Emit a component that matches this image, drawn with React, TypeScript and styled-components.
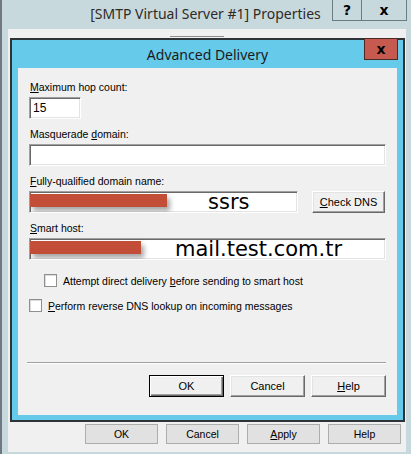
import styled, { createGlobalStyle } from 'styled-components';

const GlobalStyle = createGlobalStyle`
  html, body {
    margin: 0;
    padding: 0;
    background: #c8d9de;
  }
  * {
    box-sizing: border-box;
  }
`;

const Frame = styled.div`
  width: 411px;
  height: 454px;

  display: flex;
  flex-direction: column;

  background: #c8d9de;
  border-left: 2px solid #6f7881;
  overflow: hidden;
`;

const TitleBar = styled.div`
  height: 29px;

  position: relative;

  display: flex;
  align-items: flex-start;
  justify-content: center;

  padding-top: 4px;
  padding-right: 2px;
`;

const TitleText = styled.span`
  font-family: 'Noto Sans', 'Open Sans', sans-serif;
  font-size: 14px;
  line-height: 20px;
  color: #2f2a24;
`;

const CaptionButtons = styled.div`
  position: absolute;
  top: -1px;
  right: 4px;

  display: flex;
`;

const CaptionButton = styled.div<{ $w: number }>`
  width: ${(p) => p.$w}px;
  height: 22px;

  display: flex;
  align-items: center;
  justify-content: center;

  border: 1px solid #6b7b83;
  & + & {
    border-left: none;
  }

  font-family: 'DejaVu Sans', sans-serif;
  font-weight: bold;
  font-size: 14px;
  color: #000;
`;

const Client = styled.div`
  flex: 1;

  margin-left: 6px;
  margin-right: 5px;
  margin-bottom: 2px;
  padding: 9px 0 0 2px;

  display: flex;
  flex-direction: column;

  background: #f0f0f0;
  position: relative;
`;

const TabEdge = styled.div`
  position: absolute;
  top: 7px;
  left: 162px;

  width: 54px;
  height: 1px;

  background: #8d8d8d;
`;

const Dialog = styled.div`
  width: 395px;
  height: 384px;

  display: flex;
  flex-direction: column;

  background: #66cbea;
  border: 2px solid #2e3338;

  position: relative;
  z-index: 1;
`;

const DialogTitle = styled.div`
  height: 28px;

  display: flex;
  align-items: center;
  justify-content: center;

  position: relative;

  font-family: 'Noto Sans', 'Open Sans', sans-serif;
  font-size: 14px;
  color: #1b1b1b;
`;

const CloseButton = styled.div`
  position: absolute;
  top: -2px;
  right: 5px;

  width: 34px;
  height: 22px;

  display: flex;
  align-items: center;
  justify-content: center;

  background: #c75a4f;
  border: 1px solid #4a2a27;

  font-family: 'DejaVu Sans', sans-serif;
  font-weight: bold;
  font-size: 14px;
  color: #000;
`;

const Content = styled.div`
  flex: 1;

  margin: 0 6px 5px 6px;
  padding: 13px 11px 18px 11px;

  display: flex;
  flex-direction: column;

  background: #f0f0f0;

  font-family: 'Liberation Sans', Arial, sans-serif;
  font-size: 10.5px;
  color: #000;
`;

const Fields = styled.div`
  display: flex;
  flex-direction: column;
  gap: 9px;
`;

const Field = styled.div`
  display: flex;
  flex-direction: column;
  gap: 3px;
`;

const Label = styled.div`
  height: 13px;
  line-height: 13px;
  padding-left: 1px;
  white-space: nowrap;
`;

const Row = styled.div`
  display: flex;
  align-items: center;
  gap: 14px;
`;

const TextBox = styled.div<{ $w?: number }>`
  width: ${(p) => (p.$w ? `${p.$w}px` : '100%')};
  height: 22px;

  position: relative;

  display: flex;
  align-items: center;

  padding-left: 3px;

  background: #fff;
  border: 1px solid;
  border-color: #a0a0a0 #fff #fff #a0a0a0;
  box-shadow: inset 1px 1px 0 #696969, inset -1px -1px 0 #e3e3e3;

  font-size: 12px;
  overflow: hidden;
`;

const BigValue = styled.span<{ $left: number }>`
  position: absolute;
  left: ${(p) => p.$left}px;
  top: -2px;

  font-family: 'DejaVu Sans', Verdana, sans-serif;
  font-size: 21px;
  line-height: 24px;
  color: #000;
`;

const Redact = styled.div<{ $w: number }>`
  position: absolute;
  left: 0;
  top: 2px;

  width: ${(p) => p.$w}px;
  height: 13px;

  background: #c24e37;
  box-shadow: 3px 4px 5px rgba(0, 0, 0, 0.35);
`;

const Button = styled.div<{ $w: number; $default?: boolean }>`
  width: ${(p) => p.$w}px;
  height: 22px;

  display: flex;
  align-items: center;
  justify-content: center;

  background: #f0f0f0;
  border: 1px solid;
  border-color: ${(p) => (p.$default ? '#000' : '#fff #696969 #696969 #fff')};
  box-shadow: ${(p) =>
    p.$default
      ? 'inset 1px 1px 0 #fff, inset -1px -1px 0 #696969, inset -2px -2px 0 #a0a0a0'
      : 'inset -1px -1px 0 #a0a0a0, inset 1px 1px 0 #e3e3e3'};

  font-size: 11px;
  white-space: nowrap;
`;

const Checks = styled.div`
  margin-top: 14px;

  display: flex;
  flex-direction: column;
  gap: 12px;
`;

const CheckRow = styled.div<{ $indent?: number }>`
  height: 13px;

  display: flex;
  align-items: center;
  gap: 6px;

  padding-left: ${(p) => p.$indent ?? 0}px;
  white-space: nowrap;
`;

const Box = styled.span`
  width: 13px;
  height: 13px;

  background: #fff;
  border: 1px solid #8f8f8f;
  box-shadow: inset 1px 1px 0 #dcdcdc;
`;

const Separator = styled.div`
  margin-top: auto;
  margin-left: -2px;
  margin-bottom: 11px;

  height: 2px;

  border-top: 1px solid #a0a0a0;
  border-bottom: 1px solid #fff;
`;

const ButtonRow = styled.div<{ $gap: number }>`
  display: flex;
  justify-content: flex-end;
  gap: ${(p) => p.$gap}px;
`;

const OuterButtons = styled.div`
  margin-top: 2px;
  padding-right: 5px;

  display: flex;
  justify-content: flex-end;
  gap: 8px;
`;

const FlatButton = styled.div`
  width: 73px;
  height: 20px;

  display: flex;
  align-items: center;
  justify-content: center;

  background: #e1e1e1;
  border: 1px solid #adadad;

  font-family: 'Liberation Sans', Arial, sans-serif;
  font-size: 10.5px;
  color: #000;
`;

const U = styled.span`
  text-decoration: underline;
  text-underline-offset: 1px;
`;

export default function App() {
  return (
    <>
      <GlobalStyle />
      <Frame>
        <TitleBar>
          <TitleText>[SMTP Virtual Server #1] Properties</TitleText>
          <CaptionButtons>
            <CaptionButton $w={30}>?</CaptionButton>
            <CaptionButton $w={45}>x</CaptionButton>
          </CaptionButtons>
        </TitleBar>
        <Client>
          <TabEdge />
          <Dialog>
            <DialogTitle>
              Advanced Delivery
              <CloseButton>x</CloseButton>
            </DialogTitle>
            <Content>
              <Fields>
                <Field>
                  <Label>
                    <U>M</U>aximum hop count:
                  </Label>
                  <TextBox $w={52}>15</TextBox>
                </Field>
                <Field>
                  <Label>
                    Masquerade <U>d</U>omain:
                  </Label>
                  <TextBox />
                </Field>
                <Field>
                  <Label>
                    <U>F</U>ully-qualified domain name:
                  </Label>
                  <Row>
                    <TextBox $w={269}>
                      <Redact $w={137} />
                      <BigValue $left={178}>ssrs</BigValue>
                    </TextBox>
                    <Button $w={73}>
                      <span>
                        <U>C</U>heck DNS
                      </span>
                    </Button>
                  </Row>
                </Field>
                <Field>
                  <Label>
                    <U>S</U>mart host:
                  </Label>
                  <TextBox>
                    <Redact $w={111} />
                    <BigValue $left={145}>mail.test.com.tr</BigValue>
                  </TextBox>
                </Field>
              </Fields>
              <Checks>
                <CheckRow $indent={15}>
                  <Box />
                  <span>
                    Attempt direct delivery <U>b</U>efore sending to smart host
                  </span>
                </CheckRow>
                <CheckRow>
                  <Box />
                  <span>
                    <U>P</U>erform reverse DNS lookup on incoming messages
                  </span>
                </CheckRow>
              </Checks>
              <Separator />
              <ButtonRow $gap={6}>
                <Button $w={75} $default>
                  OK
                </Button>
                <Button $w={75}>Cancel</Button>
                <Button $w={75}>
                  <span>
                    <U>H</U>elp
                  </span>
                </Button>
              </ButtonRow>
            </Content>
          </Dialog>
          <OuterButtons>
            <FlatButton>OK</FlatButton>
            <FlatButton>Cancel</FlatButton>
            <FlatButton>
              <span>
                <U>A</U>pply
              </span>
            </FlatButton>
            <FlatButton>Help</FlatButton>
          </OuterButtons>
        </Client>
      </Frame>
    </>
  );
}
